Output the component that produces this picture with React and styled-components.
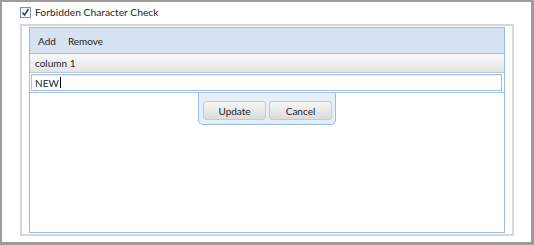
import styled, { createGlobalStyle } from "styled-components";

const Global = createGlobalStyle`
  html, body {
    margin: 0;
    padding: 0;
    background: #ffffff;
  }
  body {
    font-family: Lato, "Open Sans", sans-serif;
    font-size: 10px;
    color: #222;
  }
`;

const Frame = styled.div`
  width: 534px;
  height: 245px;
  box-sizing: border-box;
  border-style: solid;
  border-color: #9c9c9c;
  border-width: 2px 3px 3px 2px;
  background: #fff;
  display: flex;
  flex-direction: column;
`;

const CheckRow = styled.label`
  display: flex;
  align-items: center;
  gap: 4px;
  height: 20px;
  margin: 0 0 0 18px;
  font-size: 10.3px;
  color: #1f1f1f;
`;

const Box = styled.span`
  width: 9px;
  height: 9px;
  border: 1px solid #8f8f9a;
  background: linear-gradient(#f0f0f0, #ffffff);
  display: flex;
  align-items: center;
  justify-content: center;
`;

const Panel = styled.div`
  flex: 1;
  margin: 2px 17px 6px 18px;
  border: 2px solid #d6d6de;
  padding: 1px 7px 1px 7px;
  display: flex;
`;

const Grid = styled.div`
  flex: 1;
  border: 1px solid #99bbe8;
  display: flex;
  flex-direction: column;
`;

const Toolbar = styled.div`
  height: 25px;
  background: #d7e3f3;
  border-bottom: 1px solid #99bbe8;
  display: flex;
  align-items: center;
  gap: 12px;
  padding-left: 8px;
`;

const ToolButton = styled.span`
  color: #222;
`;

const Header = styled.div`
  height: 18px;
  background: linear-gradient(#f9f9f9, #e3e4e6);
  border-bottom: 1px solid #c5c5c5;
  display: flex;
  align-items: center;
  padding-left: 5px;
`;

const Body = styled.div`
  flex: 1;
  background: #fff;
  display: flex;
  flex-direction: column;
`;

const EditorRow = styled.div`
  padding: 1px 2px 1px 1px;
  border-bottom: 1px solid #a9c4ea;
`;

const Input = styled.div`
  height: 15px;
  border: 1px solid #9fc0ea;
  background: #fff;
  display: flex;
  align-items: center;
  padding-left: 3px;
  box-shadow: inset 0 1px 1px #e3ecf8;
`;

const Caret = styled.span`
  display: inline-block;
  width: 1px;
  height: 11px;
  background: #000;
  margin-left: 1px;
`;

const ButtonBar = styled.div`
  align-self: center;
  width: 129px;
  display: flex;
  gap: 3px;
  padding: 8px 3px 4px 4px;
  background: #e6eef9;
  border: 1px solid #99bbe8;
  border-top: none;
  border-radius: 0 0 5px 5px;
`;

const Button = styled.button`
  width: 63px;
  height: 19px;
  padding: 0;
  border: 1px solid #c9c9c9;
  border-radius: 3px;
  background: linear-gradient(#f6f6f6, #e9e9e9 50%, #dcdcdc);
  font-family: inherit;
  font-size: 10px;
  color: #222;
`;

export default function App() {
  return (
    <>
      <Global />
      <Frame>
        <CheckRow>
          <Box>
            <svg width="9" height="9" viewBox="0 0 9 9">
              <path d="M1.5 4.5 L3.5 7 L7.5 1" fill="none" stroke="#2b3a6b" strokeWidth="1.4" />
            </svg>
          </Box>
          Forbidden Character Check
        </CheckRow>
        <Panel>
          <Grid>
            <Toolbar>
              <ToolButton>Add</ToolButton>
              <ToolButton>Remove</ToolButton>
            </Toolbar>
            <Header>column 1</Header>
            <Body>
              <EditorRow>
                <Input>
                  NEW<Caret />
                </Input>
              </EditorRow>
              <ButtonBar>
                <Button>Update</Button>
                <Button>Cancel</Button>
              </ButtonBar>
            </Body>
          </Grid>
        </Panel>
      </Frame>
    </>
  );
}
